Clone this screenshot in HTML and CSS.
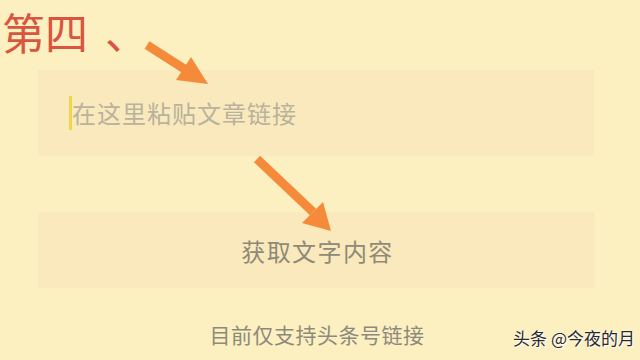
FILE: index.html
```html
<!DOCTYPE html>
<html lang="zh">
<head>
<meta charset="utf-8">
<link rel="stylesheet" href="styles.css">
</head>
<body>
<div class="page">
  <div class="title">第四<span class="comma">、</span></div>
  <div class="input-box">
    <span class="caret"></span>
    <span class="placeholder">在这里粘贴文章链接</span>
  </div>
  <div class="btn">获取文字内容</div>
  <div class="note">目前仅支持头条号链接</div>

  <svg class="arrow arrow1" width="640" height="360" viewBox="0 0 640 360">
    <line x1="147" y1="45" x2="186" y2="70" stroke="#f58a3a" stroke-width="9"/>
    <polygon points="191,57 176,80 208,84" fill="#f58a3a"/>
  </svg>
  <svg class="arrow arrow2" width="640" height="360" viewBox="0 0 640 360">
    <line x1="257" y1="159" x2="313" y2="212" stroke="#f58a3a" stroke-width="9"/>
    <polygon points="323,202 302,223 331,231" fill="#f58a3a"/>
  </svg>

  <div class="watermark">头条 @今夜的月</div>
</div>
</body>
</html>
```
FILE: styles.css
```css
html, body {
  margin: 0;
  padding: 0;
}
body {
  background: #fcefc0;
  font-family: "Noto Sans CJK SC", "Noto Sans", sans-serif;
}
.page {
  position: relative;
  width: 640px;
  height: 360px;
  overflow: hidden;
}
.title {
  font-size: 43px;
  line-height: normal;
  color: #d9553f;
  padding-left: 2px;
  height: 60px;
}
.comma {
  margin-left: 17px;
  position: relative;
  top: -1px;
}
.input-box {
  margin: 10px 0 0 38px;
  width: 556px;
  height: 86px;
  background: #f9e9bc;
  display: flex;
  align-items: center;
  padding-left: 31px;
  box-sizing: border-box;
}
.caret {
  width: 3px;
  height: 34px;
  background: #f1d64a;
}
.placeholder {
  font-size: 24px;
  line-height: 30px;
  color: #b9b29d;
  letter-spacing: 1px;
}
.btn {
  margin: 56px 0 0 38px;
  width: 557px;
  height: 76px;
  background: #f9e9bc;
  display: flex;
  align-items: center;
  justify-content: center;
  font-size: 24px;
  color: #8f8a78;
  letter-spacing: 1.4px;
  padding-left: 2px;
  box-sizing: border-box;
}
.note {
  margin-top: 32px;
  text-align: center;
  font-size: 21px;
  line-height: 28px;
  color: #8d8a7c;
  letter-spacing: 0.5px;
  padding-right: 6px;
}
.arrow {
  position: absolute;
  left: 0;
  top: 0;
}
.watermark {
  position: absolute;
  right: 5px;
  bottom: 12px;
  font-size: 17px;
  line-height: 20px;
  color: #2a2a2a;
  text-shadow: 0 0 2px #ffffff, 1px 1px 1px #ffffff;
}
```
